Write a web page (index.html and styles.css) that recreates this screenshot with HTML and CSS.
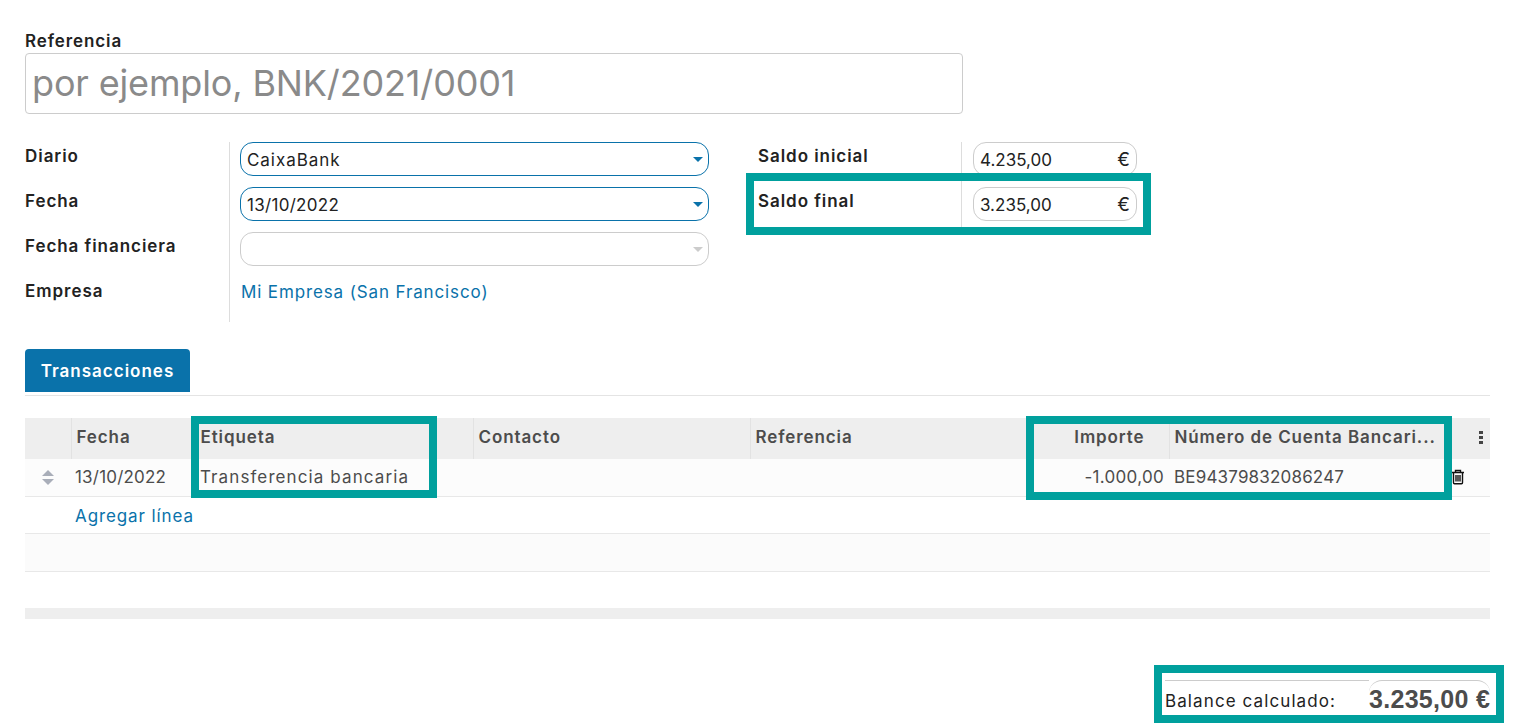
FILE: index.html
```html
<!DOCTYPE html>
<html lang="es">
<head>
    <meta charset="UTF-8">
    <title>Extracto bancario</title>
    <link rel="stylesheet" href="styles.css">
</head>
<body>
<div class="sheet">

    <label class="ref-label">Referencia</label>
    <div class="ref-input">por ejemplo, BNK/2021/0001</div>

    <div class="form-groups">
        <div class="group group-left">
            <div class="labels">
                <div class="lbl">Diario</div>
                <div class="lbl">Fecha</div>
                <div class="lbl">Fecha financiera</div>
                <div class="lbl">Empresa</div>
            </div>
            <div class="fields">
                <div class="select focus"><span class="word">CaixaBank</span><i class="caret"></i></div>
                <div class="select focus"><span class="digits">13/10/2022</span><i class="caret"></i></div>
                <div class="select"><span></span><i class="caret muted"></i></div>
                <a class="link company">Mi Empresa (San Francisco)</a>
            </div>
        </div>
        <div class="group group-right">
            <div class="labels">
                <div class="lbl">Saldo inicial</div>
                <div class="lbl">Saldo final</div>
            </div>
            <div class="fields">
                <div class="money"><span>4.235,00</span><span class="euro">€</span></div>
                <div class="money"><span>3.235,00</span><span class="euro">€</span></div>
            </div>
        </div>
    </div>

    <div class="tabs"><div class="tab">Transacciones</div></div>

    <table class="lines">
        <colgroup>
            <col class="c-handle"><col class="c-date"><col class="c-label"><col class="c-contact">
            <col class="c-ref"><col class="c-amount"><col class="c-iban"><col class="c-opt">
        </colgroup>
        <thead>
            <tr>
                <th></th>
                <th>Fecha</th>
                <th>Etiqueta</th>
                <th>Contacto</th>
                <th>Referencia</th>
                <th class="num">Importe</th>
                <th>Número de Cuenta Bancari...</th>
                <th class="opt"><span class="kebab"><i></i><i></i><i></i></span></th>
            </tr>
        </thead>
        <tbody>
            <tr class="row-data">
                <td class="handle"><i class="up"></i><i class="down"></i></td>
                <td class="digits cell-date">13/10/2022</td>
                <td class="label-text">Transferencia bancaria</td>
                <td></td>
                <td></td>
                <td class="num digits">-1.000,00</td>
                <td class="digits iban">BE94379832086247</td>
                <td class="trash">
                    <svg width="14" height="16" viewBox="0 0 14 16" fill="none" stroke="#111" stroke-width="1.4">
                        <path d="M1 3.5h12M4.5 3.5V1.5h5v2M2.5 3.5v10.3q0 1 1 1h7q1 0 1-1V3.5"/>
                        <path d="M5 6v6.5M7 6v6.5M9 6v6.5"/>
                    </svg>
                </td>
            </tr>
            <tr class="row-add">
                <td></td>
                <td colspan="7" class="add-cell"><a class="link">Agregar línea</a></td>
            </tr>
            <tr class="row-empty"><td colspan="8"></td></tr>
            <tr class="row-blank"><td colspan="8"></td></tr>
        </tbody>
        <tfoot>
            <tr><td colspan="8"></td></tr>
        </tfoot>
    </table>

    <div class="balance">
        <div class="balance-label">Balance calculado:</div>
        <div class="balance-value">3.235,00 €</div>
    </div>

    <!-- marcas de la captura -->
    <div class="mark mark-saldo"></div>
    <div class="mark mark-etiqueta"></div>
    <div class="mark mark-importe"></div>
    <div class="mark mark-balance"></div>
</div>
</body>
</html>
```

FILE: styles.css
```css
html, body { margin: 0; padding: 0; background: #fff; }
body { font-family: Inter, "Open Sans", sans-serif; font-size: 17px; color: #222; overflow: hidden; }

.sheet { position: relative; width: 1526px; height: 723px; padding: 31px 36px 0 25px; box-sizing: border-box; overflow: hidden; }

.word { letter-spacing: 0.95px; }
.digits { letter-spacing: 0.3px; }

.ref-label { display: block; height: 22px; line-height: 20px; font-weight: 600; letter-spacing: 0.9px; }
.ref-input { width: 938px; height: 61px; box-sizing: border-box; border: 1px solid #ccc; border-radius: 4px; padding: 0 6px; line-height: 59px; font-size: 36px; color: #8a8a8a; letter-spacing: -0.15px; }

.form-groups { display: flex; margin-top: 28px; }
.group { display: flex; }
.group-left { width: 733px; }
.labels { border-right: 1px solid #ddd; box-sizing: border-box; }
.group-left .labels { width: 205px; height: 180px; }
.group-right .labels { width: 204px; height: 90px; }
.lbl { height: 45px; line-height: 28px; font-weight: 600; letter-spacing: 0.95px; }
.fields { padding-left: 10px; }

.select { display: flex; justify-content: space-between; align-items: center; width: 469px; height: 34px; margin-bottom: 11px; padding: 1px 5px 0 6px; box-sizing: border-box; border: 1px solid #ccc; border-radius: 13px; }
.select.focus { border-color: #0a72aa; }
.caret { width: 0; height: 0; border: 5px solid transparent; border-top-color: #0a72aa; border-bottom: 0; }
.caret.muted { border-top-color: #ccc; }
.link { color: #0a72aa; letter-spacing: 0.9px; }
.company { display: block; line-height: 30px; padding-left: 1px; letter-spacing: 0.87px; }

.group-right .fields { padding-left: 11px; }
.money { display: flex; justify-content: space-between; align-items: center; width: 164px; height: 34px; margin-bottom: 11px; padding: 1px 6px 0 6px; box-sizing: border-box; border: 1px solid #ccc; border-radius: 13px; }
.euro { font-size: 19px; }

.tabs { margin-top: 27px; height: 47px; border-bottom: 1px solid #e4e4e4; box-sizing: border-box; }
.tab { width: 165px; height: 43px; line-height: 44px; background: #0a72aa; color: #fff; font-weight: 600; text-align: center; letter-spacing: 1px; border-radius: 4px 4px 0 0; box-sizing: border-box; }

.lines { width: 1465px; table-layout: fixed; border-collapse: collapse; margin-top: 22px; color: #4c4c4c; }
.c-handle { width: 46px; }
.c-date { width: 124px; }
.c-label { width: 278px; }
.c-contact { width: 277px; }
.c-ref { width: 280px; }
.c-amount { width: 139px; }
.c-iban { width: 281px; }
.c-opt { width: 40px; }

.lines th { height: 41px; padding: 0 5px 4px; background: #eee; border-left: 1px solid #e2e2e2; text-align: left; font-weight: 600; white-space: nowrap; overflow: hidden; letter-spacing: 0.9px; box-sizing: border-box; }
.lines th:first-child { border-left: 0; }
.lines th.opt { border-left: 0; text-align: right; padding: 0 7px 5px 0; }
.lines td { padding: 0 5px 1px; box-sizing: border-box; white-space: nowrap; }
.lines .num { text-align: right; }
th.num { padding-right: 24px !important; }

.lines .cell-date { padding-left: 4px; letter-spacing: 0.2px; }
.lines .label-text { letter-spacing: 1.1px; }
.lines .iban { letter-spacing: 0.18px; }
.lines .add-cell { padding: 3px 0 0 4px; }

.row-data td { height: 37px; background: #fcfcfc; border-bottom: 1px solid #e8e8e8; }
.row-add td { height: 37px; border-bottom: 1px solid #e8e8e8; }
.row-empty td { height: 38px; background: #fbfbfb; border-bottom: 1px solid #e8e8e8; }
.row-blank td { height: 37px; }
tfoot td { height: 11px; background: #eee; }

.handle { text-align: center; padding: 0 !important; }
.handle i { display: block; width: 0; height: 0; margin: 0 auto; border: 6px solid transparent; }
.handle .up { border-top: 0; border-bottom: 6px solid #a9aeb9; margin-bottom: 3px; }
.handle .down { border-bottom: 0; border-top: 6px solid #a9aeb9; }

.kebab { display: inline-flex; flex-direction: column; gap: 2px; vertical-align: middle; }
.kebab i { display: block; width: 4px; height: 3px; background: #444; }
.trash { padding: 0 !important; }
.trash svg { display: block; margin-left: 1px; }

.balance { position: absolute; top: 680px; left: 1165px; width: 325px; display: flex; }
.balance-label { width: 204px; height: 42px; line-height: 40px; border-top: 1px solid #ccc; box-sizing: border-box; letter-spacing: 1.1px; }
.balance-value { width: 121px; height: 42px; border-top: 1px solid #ccc; border-radius: 13px 13px 0 0; box-sizing: border-box; font-family: "Liberation Sans", Arial, sans-serif; font-weight: 700; font-size: 25px; line-height: 36px; letter-spacing: 0.3px; color: #4c4c4c; white-space: nowrap; }

/* recuadros verdes encima de la captura */
.mark { position: absolute; border: 8px solid #00a09d; box-sizing: border-box; }
.mark-saldo { left: 746px; top: 173px; width: 405px; height: 62px; }
.mark-etiqueta { left: 191px; top: 416px; width: 246px; height: 82px; }
.mark-importe { left: 1026px; top: 416px; width: 426px; height: 84px; }
.mark-balance { left: 1154px; top: 665px; width: 350px; height: 58px; }
```
